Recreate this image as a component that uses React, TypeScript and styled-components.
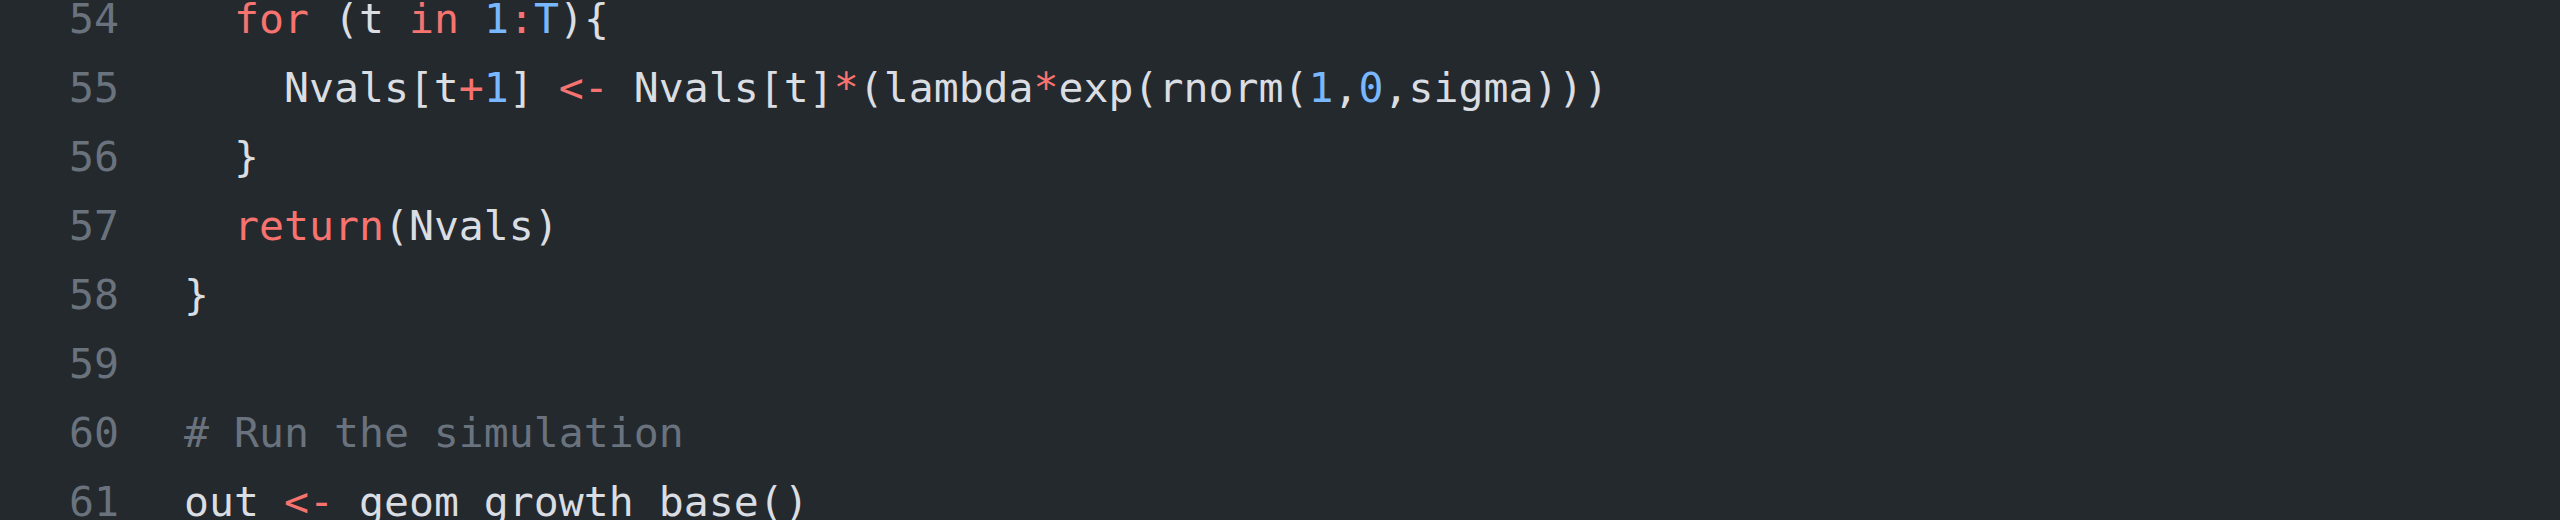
import React from "react";
import styled, { createGlobalStyle } from "styled-components";

const Global = createGlobalStyle`
  html, body {
    margin: 0;
    padding: 0;
    background: #24292e;
  }
  body {
    width: 2560px;
    height: 520px;
    overflow: hidden;
  }
`;

const Viewer = styled.div`
  width: 2560px;
  height: 520px;
  overflow: hidden;
  background: #24292e;
  font-family: "DejaVu Sans Mono", "Liberation Mono", monospace;
  font-size: 41.5px;
  line-height: 69px;
`;

const Lines = styled.div`
  display: flex;
  flex-direction: column;
  margin-top: -16px;
`;

const Row = styled.div`
  display: grid;
  grid-template-columns: 119px 1fr;
  column-gap: 65px;
  height: 69px;
`;

const LineNo = styled.span`
  text-align: right;
  color: #6a737d;
  user-select: none;
`;

const Code = styled.span`
  color: #dadde1;
  white-space: pre;
`;

type Kind = "kw" | "num" | "com";

const Tok = styled.span<{ $k: Kind }>`
  color: ${(p) =>
    p.$k === "kw" ? "#f7736f" : p.$k === "num" ? "#79b8ff" : "#6a737d"};
`;

const K = ({ children }: { children: React.ReactNode }) => <Tok $k="kw">{children}</Tok>;
const N = ({ children }: { children: React.ReactNode }) => <Tok $k="num">{children}</Tok>;
const C = ({ children }: { children: React.ReactNode }) => <Tok $k="com">{children}</Tok>;

const lines: { n: number; code: React.ReactNode }[] = [
  {
    n: 54,
    code: (
      <>
        {"  "}
        <K>for</K>
        {" (t "}
        <K>in</K> <N>1</N>
        <K>:</K>
        <N>T</N>
        {"){"}
      </>
    ),
  },
  {
    n: 55,
    code: (
      <>
        {"    Nvals[t"}
        <K>+</K>
        <N>1</N>
        {"] "}
        <K>{"<-"}</K>
        {" Nvals[t]"}
        <K>*</K>
        {"(lambda"}
        <K>*</K>
        {"exp(rnorm("}
        <N>1</N>
        {","}
        <N>0</N>
        {",sigma)))"}
      </>
    ),
  },
  { n: 56, code: <>{"  }"}</> },
  {
    n: 57,
    code: (
      <>
        {"  "}
        <K>return</K>
        {"(Nvals)"}
      </>
    ),
  },
  { n: 58, code: <>{"}"}</> },
  { n: 59, code: <>{""}</> },
  { n: 60, code: <C># Run the simulation</C> },
  {
    n: 61,
    code: (
      <>
        {"out "}
        <K>{"<-"}</K>
        {" geom_growth_base()"}
      </>
    ),
  },
];

export default function App() {
  return (
    <>
      <Global />
      <Viewer>
        <Lines>
          {lines.map((l) => (
            <Row key={l.n}>
              <LineNo>{l.n}</LineNo>
              <Code>{l.code}</Code>
            </Row>
          ))}
        </Lines>
      </Viewer>
    </>
  );
}
